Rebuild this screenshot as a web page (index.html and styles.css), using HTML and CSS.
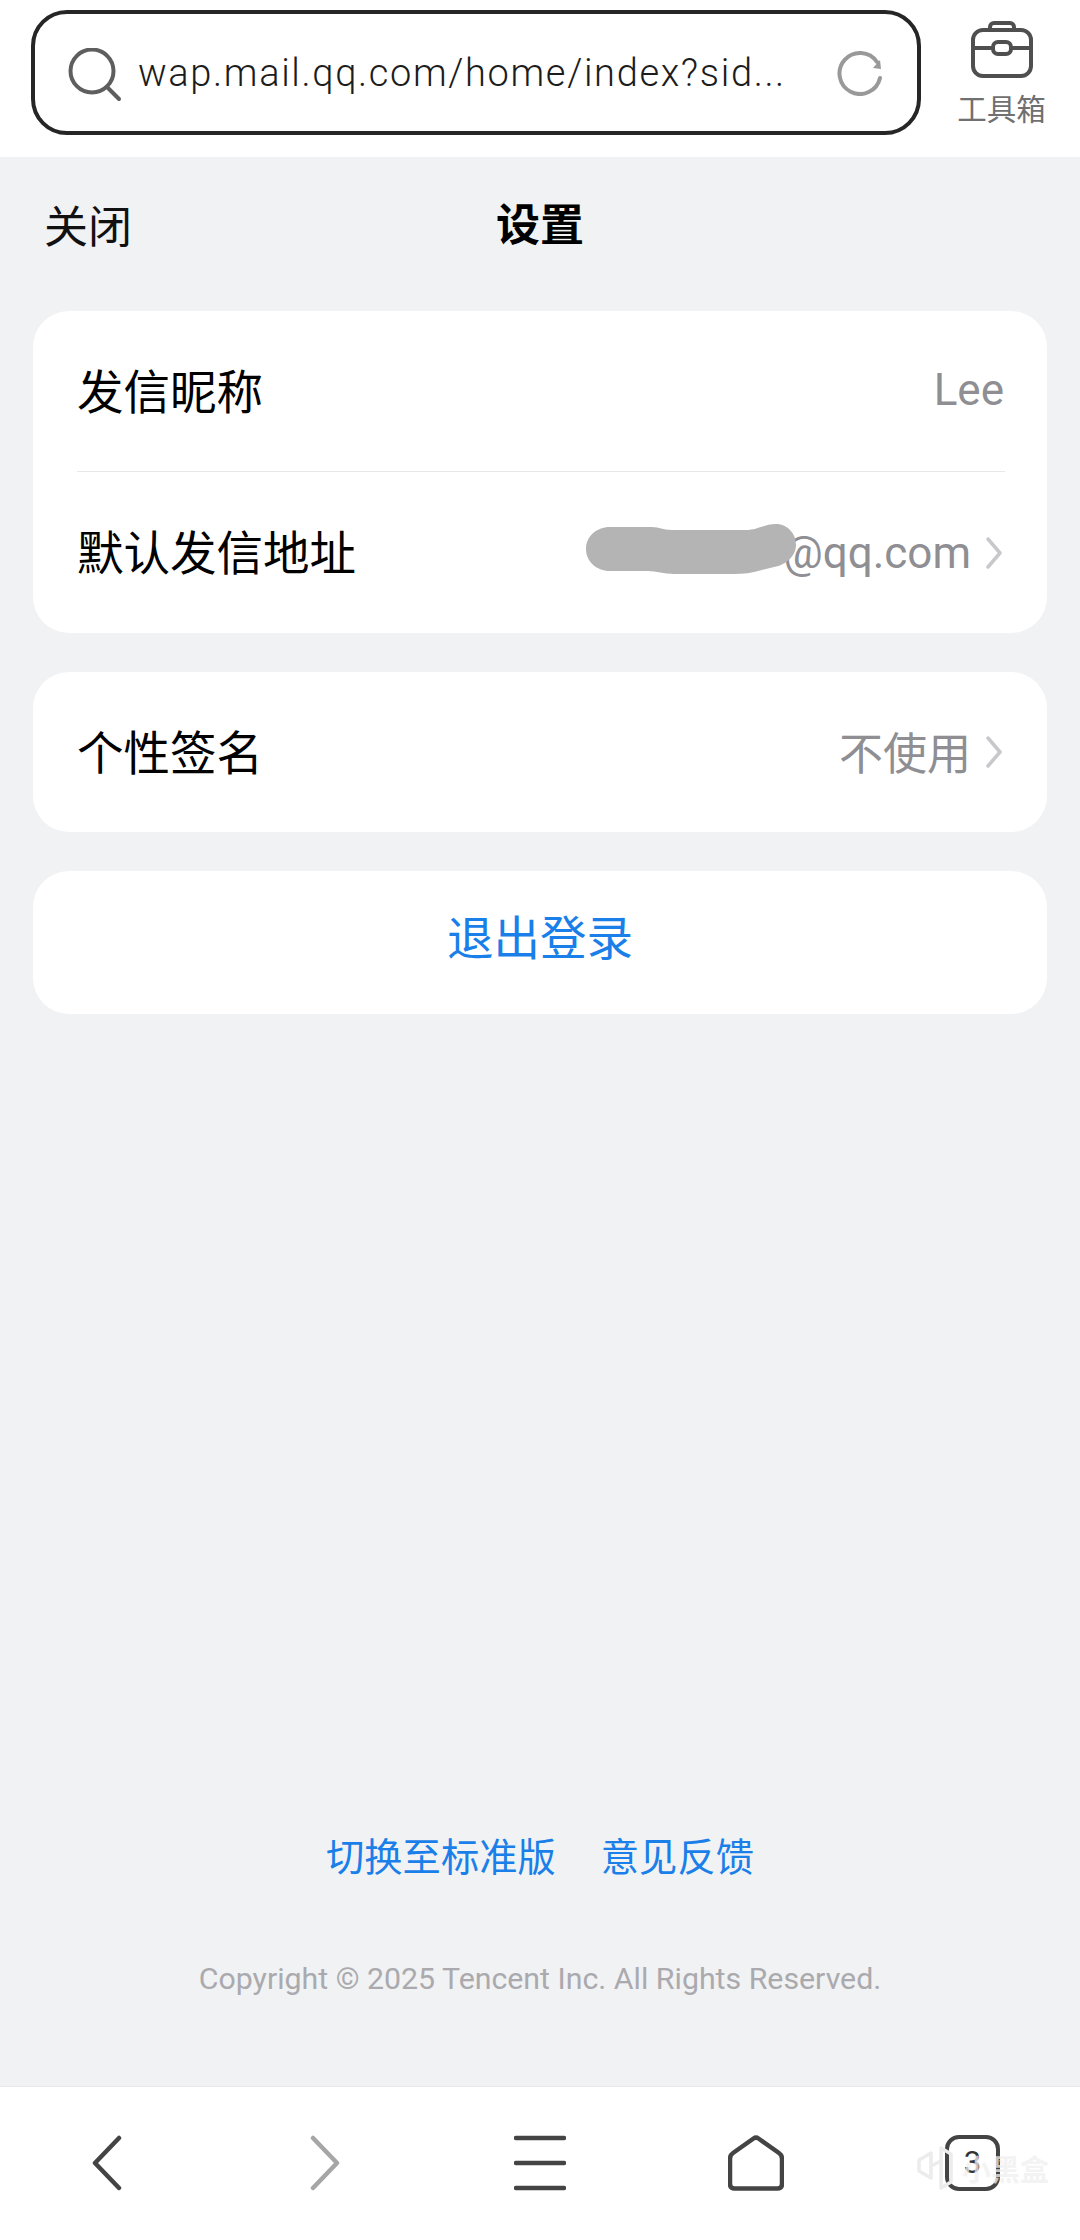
FILE: index.html
```html
<!DOCTYPE html>
<html>

	<head>
		<meta charset="UTF-8">
		<title>设置</title>
		<link rel="stylesheet" href="styles.css">
	</head>

	<body>
		<div class="page">
			<div class="browser-top">
				<div class="url-bar">
					<svg class="icon-search" viewBox="0 0 54 54" fill="none" stroke="#5e5e5e" stroke-width="4" stroke-linecap="round">
						<circle cx="24" cy="23" r="21.5" />
						<path d="M39 39l12 12" />
					</svg>
					<span class="url-text">wap.mail.qq.com/home/index?sid...</span>
					<svg class="icon-refresh" viewBox="0 0 46 46" fill="none" stroke="#999" stroke-width="4" stroke-linecap="round">
						<path d="M43 28A20.5 20.5 0 1 1 40 12" />
						<path d="M36 18l8 1-1-9" stroke-width="0" fill="#999" />
					</svg>
				</div>
				<div class="toolbox">
					<svg class="icon-toolbox" viewBox="0 0 62 58" fill="none" stroke="#4f4f4f" stroke-width="4">
						<path d="M19 10V7a4 4 0 0 1 4-4h16a4 4 0 0 1 4 4v3" />
						<rect x="2" y="10" width="58" height="46" rx="10" />
						<path d="M2 28h20M40 28h20" />
						<rect x="22" y="22" width="18" height="12" rx="5" />
					</svg>
					<span class="toolbox-label">工具箱</span>
				</div>
			</div>

			<div class="content">
				<div class="nav">
					<span class="nav-close">关闭</span>
					<span class="nav-title">设置</span>
				</div>

				<div class="card">
					<div class="row row-first">
						<span class="row-label">发信昵称</span>
						<span class="row-value value-name">Lee</span>
					</div>
					<div class="row row-second">
						<span class="row-label">默认发信地址</span>
						<span class="address">
							<svg class="scribble" viewBox="0 0 210 50" fill="#b4b4b4">
								<path d="M24 3H66C74 3 76 6 86 6H160C172 6 178 0 190 0C202 0 210 10 210 21C210 32 200 41 188 43L168 48C160 50 150 50 140 50H88C78 50 70 47 62 47H24C10 47 0 37 0 25C0 13 10 3 24 3Z" />
							</svg>
							<span class="row-value">@qq.com</span>
						</span>
						<svg class="chevron" viewBox="0 0 16 32" fill="none" stroke="#c8c8cc" stroke-width="3.5" stroke-linecap="round" stroke-linejoin="round">
							<path d="M2 2l12 14L2 30" />
						</svg>
					</div>
				</div>

				<div class="card">
					<div class="row row-single">
						<span class="row-label">个性签名</span>
						<span class="row-value value-cjk">不使用</span>
						<svg class="chevron" viewBox="0 0 16 32" fill="none" stroke="#c8c8cc" stroke-width="3.5" stroke-linecap="round" stroke-linejoin="round">
							<path d="M2 2l12 14L2 30" />
						</svg>
					</div>
				</div>

				<div class="card logout">退出登录</div>

				<div class="links">
					<a>切换至标准版</a>
					<a>意见反馈</a>
				</div>
				<p class="copyright">Copyright © 2025 Tencent Inc. All Rights Reserved.</p>
			</div>

			<div class="browser-bottom">
				<svg class="tool tool-back" viewBox="0 0 30 56" fill="none" stroke="#444" stroke-width="4.5" stroke-linecap="round" stroke-linejoin="round">
					<path d="M27 3L3 28l24 25" />
				</svg>
				<svg class="tool tool-forward" viewBox="0 0 30 56" fill="none" stroke="#a6a6a6" stroke-width="4.5" stroke-linecap="round" stroke-linejoin="round">
					<path d="M3 3l24 25L3 53" />
				</svg>
				<svg class="tool tool-menu" viewBox="0 0 52 56" fill="none" stroke="#444" stroke-width="4.5" stroke-linecap="round">
					<path d="M2 3h48M2 28h48M2 53h48" />
				</svg>
				<svg class="tool tool-home" viewBox="0 0 56 56" fill="none" stroke="#444" stroke-width="4.5" stroke-linejoin="round">
					<path d="M25.500 3.500Q28 1.800 30.500 3.500L51 18Q54 20 54 24V49Q54 53.500 49.500 53.500H6.500Q2 53.500 2 49V24Q2 20 5 18Z" />
				</svg>
				<div class="tool tool-tabs">3</div>
			</div>

			<div class="watermark">
				<svg class="wm-logo" viewBox="0 0 36 44" fill="none" stroke="#ececec" stroke-width="3.5" stroke-linejoin="round">
					<path d="M2 14L14 7V32L2 25ZM14 20L24 15M24 2L34 8V36L24 42Z" />
				</svg>
				<span class="wm-text">小黑盒</span>
			</div>
		</div>
	</body>

</html>
```

FILE: styles.css
```css
* {
	margin: 0;
	padding: 0;
	border: 0;
	box-sizing: border-box;
}

body {
	width: 1080px;
	height: 2240px;
	overflow: hidden;
	font-family: Roboto, "Noto Sans CJK SC", sans-serif;
	background: #f1f2f4;
}

.page {
	position: relative;
	display: flex;
	flex-direction: column;
	height: 2240px;
}

.browser-top {
	display: flex;
	height: 157px;
	padding: 10px 0 0 31px;
	background: #fff;
}

.url-bar {
	display: flex;
	align-items: center;
	width: 890px;
	height: 125px;
	padding: 0 34px 0 33px;
	border: 4px solid #262626;
	border-radius: 36px;
}

.icon-search {
	width: 54px;
	height: 54px;
	margin-top: 4px;
	flex: none;
}

.url-text {
	flex: 1;
	margin-left: 16px;
	font-size: 38px;
	font-weight: 300;
	letter-spacing: 1.65px;
	color: #1c1c1c;
	white-space: nowrap;
}

.icon-refresh {
	width: 46px;
	height: 46px;
	flex: none;
}

.toolbox {
	display: flex;
	flex-direction: column;
	align-items: center;
	width: 159px;
	padding-left: 2px;
}

.icon-toolbox {
	width: 62px;
	height: 58px;
	margin-top: 10px;
}

.toolbox-label {
	margin-top: 14px;
	font-size: 29.500px;
	line-height: 36px;
	color: #707070;
}

.content {
	flex: 1;
	display: flex;
	flex-direction: column;
	padding: 0 33px;
}

.nav {
	position: relative;
	display: flex;
	justify-content: center;
	align-items: center;
	height: 154px;
	padding-bottom: 24px;
}

.nav-close {
	position: absolute;
	left: 11px;
	top: 41px;
	font-size: 44px;
	line-height: 60px;
	color: #111;
}

.nav-title {
	font-size: 44px;
	font-weight: 700;
	color: #000;
}

.card {
	background: #fff;
	border-radius: 36px;
	margin-bottom: 39px;
}

.row {
	display: flex;
	align-items: center;
	padding: 0 44px;
}

.row-first {
	height: 161px;
	position: relative;
}

.row-first::after {
	content: "";
	position: absolute;
	left: 44px;
	right: 42px;
	bottom: 0;
	height: 1px;
	background: #e8e8ea;
}

.row-second {
	height: 161px;
	padding-right: 45px;
}

.row-single {
	height: 160px;
	padding-right: 45px;
}

.row-label {
	flex: 1;
	padding-bottom: 6px;
	font-size: 46.500px;
	color: #000;
}

.row-value {
	font-size: 44px;
	color: #8e8e93;
}

.value-name {
	padding-bottom: 3px;
	margin-right: -1px;
}

.value-cjk {
	padding-bottom: 2px;
}

.address {
	position: relative;
}

.scribble {
	position: absolute;
	left: -197px;
	top: -3px;
	width: 210px;
	height: 50px;
}

.chevron {
	width: 16px;
	height: 32px;
	margin-left: 15px;
	flex: none;
}

.logout {
	display: flex;
	justify-content: center;
	align-items: center;
	height: 143px;
	padding-bottom: 17px;
	font-size: 46.500px;
	color: #1a7fe8;
}

.links {
	display: flex;
	justify-content: center;
	gap: 45px;
	margin-top: 778px;
	font-size: 38.300px;
	line-height: 54px;
	color: #1a7fe8;
}

.copyright {
	margin-top: 74px;
	font-size: 30.300px;
	line-height: 40px;
	text-align: center;
	color: #aaaaae;
}

.browser-bottom {
	display: flex;
	justify-content: center;
	align-items: center;
	height: 154px;
	border-top: 1px solid #e8e8ea;
	background: #fff;
}

.tool {
	position: absolute;
	bottom: 49px;
	height: 56px;
}

.tool-back {
	left: 92px;
	width: 30px;
}

.tool-forward {
	left: 310px;
	width: 30px;
}

.tool-menu {
	left: 514px;
	width: 52px;
}

.tool-home {
	left: 728px;
	width: 56px;
}

.tool-tabs {
	left: 945px;
	width: 55px;
	border: 4.500px solid #444;
	border-radius: 14px;
	font-size: 31px;
	line-height: 47px;
	text-align: center;
	color: #333;
}

.watermark {
	position: absolute;
	left: 917px;
	bottom: 50px;
	display: flex;
	align-items: center;
	gap: 9px;
}

.wm-logo {
	width: 36px;
	height: 44px;
}

.wm-text {
	font-size: 29px;
	font-weight: 700;
	color: rgba(240, 240, 240, 0.75);
}
```
